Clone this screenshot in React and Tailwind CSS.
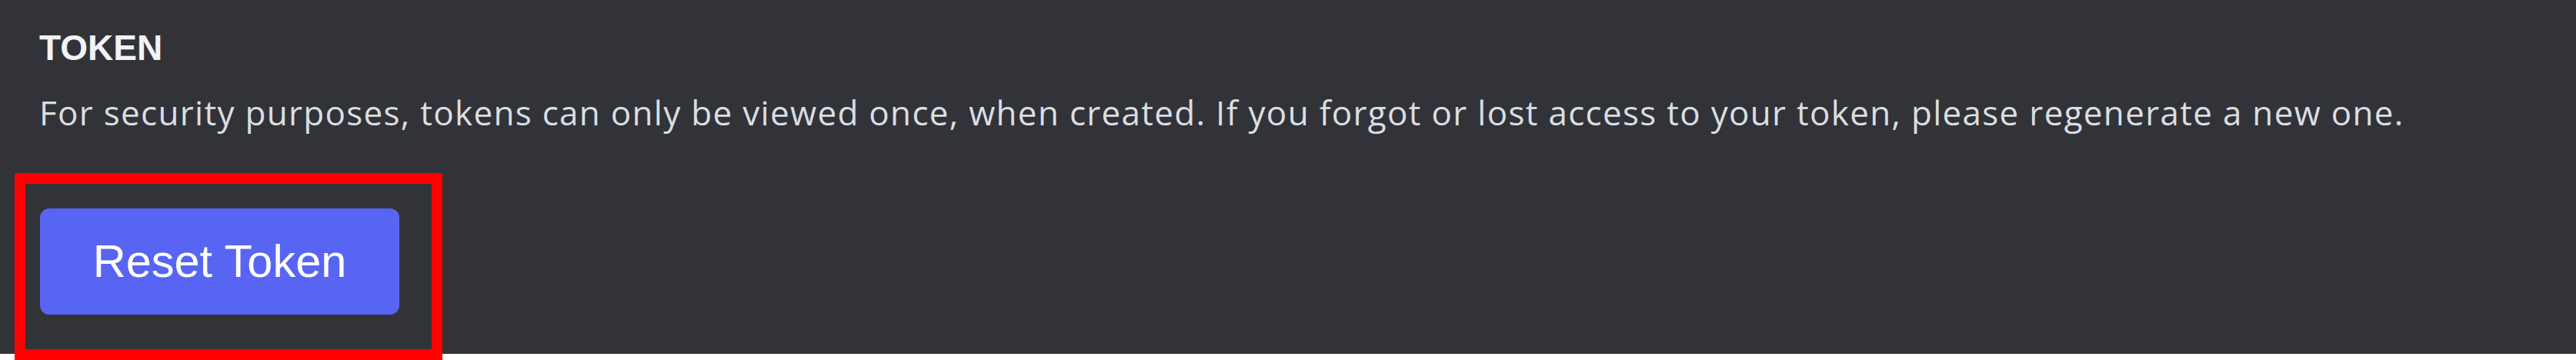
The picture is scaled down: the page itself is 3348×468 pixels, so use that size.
import React from 'react';

const App = () => {
  return (
    <div className="w-[3348px] h-[468px] bg-white font-['Liberation_Sans',Arial,sans-serif]">
      <section className="h-[460px] bg-[#313338] pl-[51px] pt-[39px]">
        <h2 className="text-[46px] leading-[46px] font-bold text-[#f2f3f5]">TOKEN</h2>
        <p className="mt-[39px] font-['Open_Sans',sans-serif] text-[44px] leading-[44px] tracking-[1.3px] text-[#dbdee1]">
          For security purposes, tokens can only be viewed once, when created. If you forgot or lost access to your token, please regenerate a new one.
        </p>
        <div className="relative mt-[103px] ml-[1px] inline-block">
          <button className="flex h-[138px] w-[467px] items-center justify-center rounded-[12px] bg-[#5865f2] text-[59.5px] text-white">
            Reset Token
          </button>
          {/* annotation box drawn over the screenshot */}
          <div className="pointer-events-none absolute -left-[33px] -top-[46px] -right-[56px] -bottom-[59px] border-[14px] border-[#ff0000]" />
        </div>
      </section>
    </div>
  );
};

export default App;
